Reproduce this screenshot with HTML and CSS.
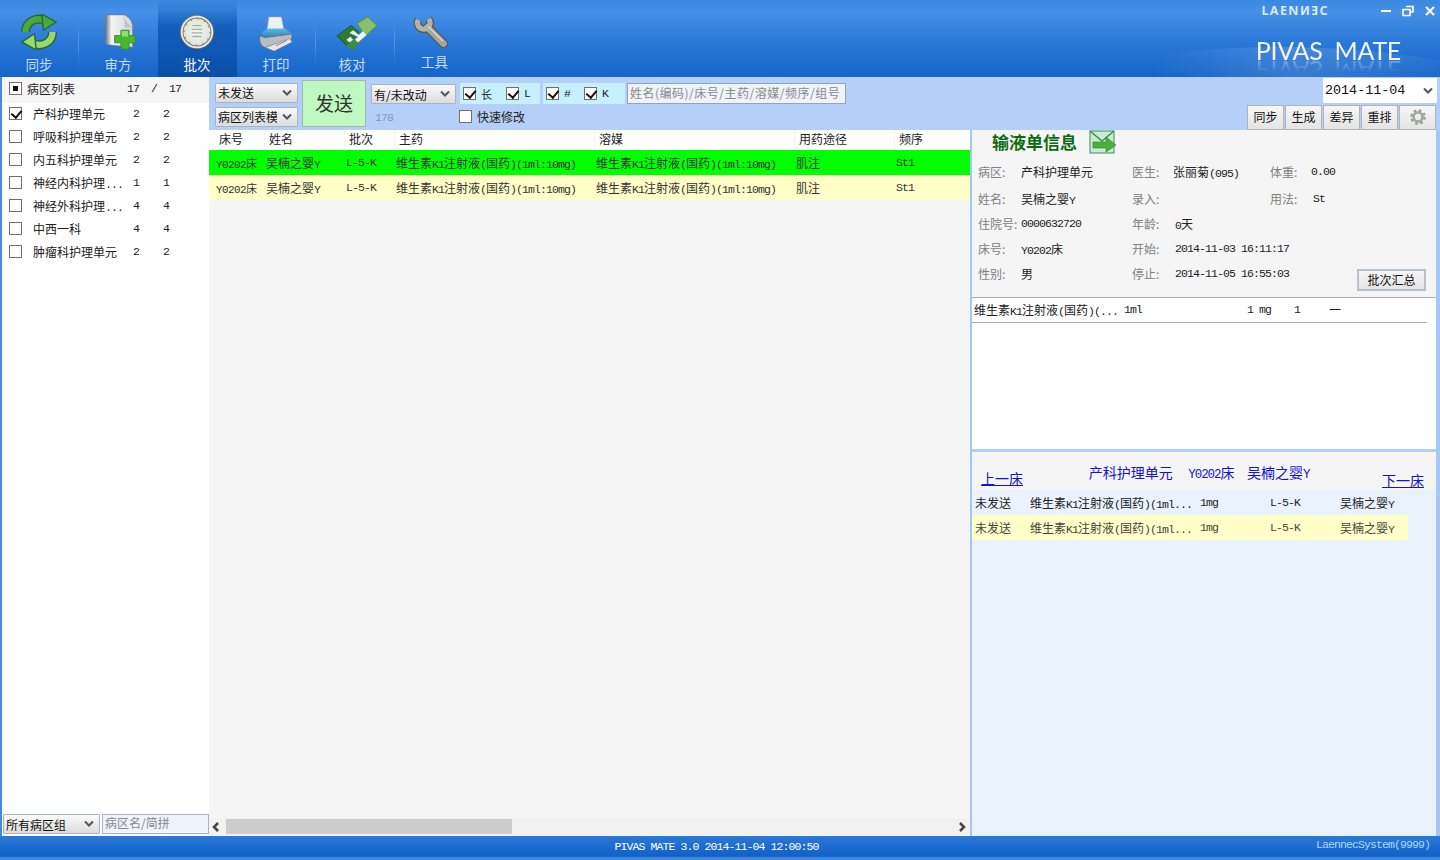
FILE: index.html
```html
<!DOCTYPE html>
<html lang="zh-CN">
<head>
    <meta charset="UTF-8">
    <title>PIVAS MATE</title>
    <link rel="stylesheet" href="styles.css">
</head>
<body>
<div class="app">
    <!-- top bar -->
    <header class="topbar">
        <nav class="tabs">
            <div class="tab">
                <svg class="tab-icon" viewBox="0 0 40 40">
                    <path d="M5 20C5 9 16 3 26 7" fill="none" stroke="#1f6b2c" stroke-width="10"/>
                    <path d="M5 20C5 9 16 3 26 7" fill="none" stroke="#4aa83c" stroke-width="7"/>
                    <path d="M23 0L39 9L25 18Z" fill="#4aa83c" stroke="#1f6b2c" stroke-width="1.500"/>
                    <path d="M35 20C35 31 24 37 14 33" fill="none" stroke="#1f6b2c" stroke-width="10"/>
                    <path d="M35 20C35 31 24 37 14 33" fill="none" stroke="#9ad86e" stroke-width="7"/>
                    <path d="M17 40L1 31L15 22Z" fill="#9ad86e" stroke="#1f6b2c" stroke-width="1.500"/>
                </svg>
                <span>同步</span>
            </div>
            <div class="tab">
                <svg class="tab-icon doc" viewBox="0 0 40 40">
                    <defs>
                        <linearGradient id="pg" x1="0" y1="0" x2="1" y2="0"><stop offset="0" stop-color="#6f757c"/><stop offset=".22" stop-color="#f4f4f4"/><stop offset="1" stop-color="#d4d6d8"/></linearGradient>
                    </defs>
                    <path d="M4 1H25C31 4 34 9 34 15V37L4 34Z" fill="url(#pg)" stroke="#6d747c" stroke-width=".6"/>
                    <path d="M25 1C26 7 28 11 34 15L25 15Z" fill="#c0c4c8"/>
                    <path d="M21 18H30V24H37V32H30V39H21V32H14V24H21Z" fill="#4ab52e" stroke="#2f8f2a"/>
                    <path d="M22 19H29V25H22Z" fill="#96e070"/>
                </svg>
                <span>审方</span>
            </div>
            <div class="tab active">
                <svg class="tab-icon" viewBox="0 0 40 40">
                    <defs>
                        <radialGradient id="cf"><stop offset="0" stop-color="#f4f7f0"/><stop offset="1" stop-color="#dfe4da"/></radialGradient>
                    </defs>
                    <circle cx="20" cy="20" r="19" fill="#77756c"/>
                    <circle cx="20" cy="20" r="17" fill="none" stroke="#ecebe4" stroke-width="2"/>
                    <circle cx="20" cy="20" r="15" fill="url(#cf)"/>
                    <circle cx="20" cy="20" r="14.500" fill="none" stroke="#77867a" stroke-width="1.600" stroke-dasharray="1.400 6.200"/>
                    <path d="M15 13H25M14 17H26M14 21H26M15 25H25" stroke="#a4aea4" stroke-width="1.400"/>
                </svg>
                <span>批次</span>
            </div>
            <div class="tab">
                <svg class="tab-icon low" viewBox="0 0 40 40">
                    <defs>
                        <linearGradient id="pr" x1="0" y1="0" x2="0" y2="1"><stop offset="0" stop-color="#5fb8e6"/><stop offset="1" stop-color="#1a6ea8"/></linearGradient>
                    </defs>
                    <path d="M12 1H26L29 16H10Z" fill="#eef0f2" stroke="#9aa0a8" stroke-width=".6"/>
                    <path d="M4 18L12 14H30L37 19V24L8 28Z" fill="url(#pr)"/>
                    <path d="M2 22C1 28 3 34 8 35L37 26C38 24 38 22 37 20L8 24Z" fill="#b9bcc0" stroke="#5e6268" stroke-width=".8"/>
                    <path d="M8 35L18 39L38 29L35 25Z" fill="#e6e6e6" stroke="#777" stroke-width=".6"/>
                    <path d="M20 33L32 27" stroke="#777"/>
                </svg>
                <span>打印</span>
            </div>
            <div class="tab shift">
                <svg class="tab-icon wide low" viewBox="0 0 44 36">
                    <path d="M1 20L16 9L24 16L11 30Z" fill="#2c7a36" stroke="#1c5a26"/>
                    <path d="M22 7L33 0L43 9L31 20Z" fill="#88c266" stroke="#4d8a3e"/>
                    <path d="M11 30L17 35L27 25L22 21Z" fill="#3d8f40"/>
                    <path d="M14 17L18 14L24 19L28 15L32 19L23 27L20 24L23 21Z" fill="#f2f4ee"/>
                    <path d="M11 24L15 21L18 24L14 27Z" fill="#f2f4ee"/>
                </svg>
                <span>核对</span>
            </div>
            <div class="tab tool">
                <svg class="tab-icon" viewBox="0 0 40 40">
                    <path d="M16 16L34 34" stroke="#57524a" stroke-width="10" stroke-linecap="round"/>
                    <path d="M5.900 7.500A7 7 0 1 0 17.400 6.500" fill="none" stroke="#57524a" stroke-width="8.500"/>
                    <path d="M16 16L34 34" stroke="#a7a59c" stroke-width="7.500" stroke-linecap="round"/>
                    <path d="M5.900 7.500A7 7 0 1 0 17.400 6.500" fill="none" stroke="#b4b2a8" stroke-width="6"/>
                    <path d="M17 15L33 31" stroke="#dcdad2" stroke-width="1.500"/>
                </svg>
                <span>工具</span>
            </div>
        </nav>
        <div class="brand">
            <svg class="swoosh" viewBox="0 0 440 77">
                <defs>
                    <linearGradient id="sw" x1="0" y1="0" x2="1" y2="0"><stop offset=".2" stop-color="#fff" stop-opacity="0"/><stop offset=".6" stop-color="#fff" stop-opacity=".14"/><stop offset="1" stop-color="#fff" stop-opacity=".04"/></linearGradient>
                </defs>
                <path d="M80 70C200 40 320 42 440 60V77H80Z" fill="url(#sw)"/>
            </svg>
            <div class="win-row">
                <span class="logo">LAENИƎC</span>
                <div class="win-btns">
                    <svg viewBox="0 0 12 12"><path d="M1 6H11" stroke="#fff" stroke-width="2"/></svg>
                    <svg viewBox="0 0 12 12"><path d="M4 1.500H11V7H8M1 4.500H8V10.500H1Z" fill="none" stroke="#fff" stroke-width="1.600"/></svg>
                    <svg viewBox="0 0 12 12"><path d="M2 2L10 10M10 2L2 10" stroke="#fff" stroke-width="2"/></svg>
                </div>
            </div>
            <div class="product">PIVAS&nbsp;&nbsp;MATE</div>
        </div>
    </header>

    <div class="main">
        <!-- left ward list -->
        <aside class="wards">
            <div class="ward-head">
                <i class="chk part"></i>
                <span class="ward-title">病区列表</span>
                <span class="n head-count">17&nbsp;&nbsp;/&nbsp;&nbsp;17</span>
            </div>
            <div class="ward"><i class="chk on"></i><span class="ward-name">产科护理单元</span><span class="n c1">2</span><span class="n c2">2</span></div>
            <div class="ward"><i class="chk"></i><span class="ward-name">呼吸科护理单元</span><span class="n c1">2</span><span class="n c2">2</span></div>
            <div class="ward"><i class="chk"></i><span class="ward-name">内五科护理单元</span><span class="n c1">2</span><span class="n c2">2</span></div>
            <div class="ward"><i class="chk"></i><span class="ward-name">神经内科护理<span class="n">...</span></span><span class="n c1">1</span><span class="n c2">1</span></div>
            <div class="ward"><i class="chk"></i><span class="ward-name">神经外科护理<span class="n">...</span></span><span class="n c1">4</span><span class="n c2">4</span></div>
            <div class="ward"><i class="chk"></i><span class="ward-name">中西一科</span><span class="n c1">4</span><span class="n c2">4</span></div>
            <div class="ward"><i class="chk"></i><span class="ward-name">肿瘤科护理单元</span><span class="n c1">2</span><span class="n c2">2</span></div>
            <div class="ward-foot">
                <select class="sel group-sel"><option>所有病区组</option></select>
                <input class="ward-search" placeholder="病区名/简拼">
            </div>
        </aside>

        <div class="work">
            <!-- filter bar -->
            <div class="filters">
                <div class="sel-col">
                    <select class="sel w83"><option>未发送</option></select>
                    <select class="sel w83"><option>病区列表模板</option></select>
                </div>
                <button class="send">发送</button>
                <div class="change-col">
                    <select class="sel change-sel"><option>有/未改动</option></select>
                    <span class="n grey-num">178</span>
                </div>
                <div class="check-col">
                    <div class="check-line">
                        <div class="strip s1">
                            <label class="ck"><i class="chk on"></i>长</label>
                            <label class="ck"><i class="chk on"></i><span class="n">L</span></label>
                        </div>
                        <div class="strip s2">
                            <label class="ck"><i class="chk on"></i><span class="n">#</span></label>
                            <label class="ck"><i class="chk on"></i><span class="n">K</span></label>
                        </div>
                        <input class="search" placeholder="姓名(编码)/床号/主药/溶媒/频序/组号">
                    </div>
                    <label class="ck fast"><i class="chk"></i>快速修改</label>
                </div>
                <div class="right-tools">
                    <select class="sel date-sel"><option>2014-11-04</option></select>
                    <div class="tool-btns">
                        <button class="tbtn">同步</button>
                        <button class="tbtn">生成</button>
                        <button class="tbtn">差异</button>
                        <button class="tbtn">重排</button>
                        <button class="tbtn gear">
                            <svg viewBox="0 0 20 20" width="18" height="18">
                                <circle cx="10" cy="10" r="7" fill="none" stroke="#9ca09c" stroke-width="3.500" stroke-dasharray="2.800 2.700"/>
                                <circle cx="10" cy="10" r="5" fill="none" stroke="#a4a8a4" stroke-width="3"/>
                            </svg>
                        </button>
                    </div>
                </div>
            </div>

            <div class="work-body">
                <!-- order grid -->
                <section class="orders">
                    <div class="row head">
                        <span>床号</span><span>姓名</span><span>批次</span><span>主药</span><span>溶媒</span><span>用药途径</span><span>频序</span>
                    </div>
                    <div class="row item green">
                        <span class="bed">Y0202床</span>
                        <span>吴楠之婴<b class="n">Y</b></span>
                        <span class="n">L-5-K</span>
                        <span>维生素<b class="n">K1</b>注射液<b class="n">(</b>国药<b class="n">)(1ml:10mg)</b></span>
                        <span>维生素<b class="n">K1</b>注射液<b class="n">(</b>国药<b class="n">)(1ml:10mg)</b></span>
                        <span>肌注</span>
                        <span class="n">St1</span>
                    </div>
                    <div class="row item yellow">
                        <span class="bed">Y0202床</span>
                        <span>吴楠之婴<b class="n">Y</b></span>
                        <span class="n">L-5-K</span>
                        <span>维生素<b class="n">K1</b>注射液<b class="n">(</b>国药<b class="n">)(1ml:10mg)</b></span>
                        <span>维生素<b class="n">K1</b>注射液<b class="n">(</b>国药<b class="n">)(1ml:10mg)</b></span>
                        <span>肌注</span>
                        <span class="n">St1</span>
                    </div>
                    <div class="hscroll">
                        <svg class="arrow" viewBox="0 0 8 10"><path d="M6 1L2 5L6 9" fill="none" stroke="#444" stroke-width="2.500"/></svg>
                        <div class="track"><div class="thumb"></div></div>
                        <svg class="arrow" viewBox="0 0 8 10"><path d="M2 1L6 5L2 9" fill="none" stroke="#444" stroke-width="2.500"/></svg>
                    </div>
                </section>

                <!-- detail panel -->
                <section class="detail">
                    <div class="info">
                        <div class="info-title">
                            <h2>输液单信息</h2>
                            <svg class="mail" viewBox="0 0 28 24">
                                <rect x="1" y="1" width="24" height="22" fill="#c8ecd0" stroke="#3c8f5a"/>
                                <path d="M1 1L13 11L25 1" fill="none" stroke="#3c8f5a" stroke-width="1.500"/>
                                <path d="M4 12H17V7L27 15L17 22V18H4Z" fill="#4cae3c" stroke="#2f7f2f" stroke-width=".6"/>
                            </svg>
                        </div>
                        <div class="info-grid">
                            <span class="lb">病区:</span><span>产科护理单元</span>
                            <span class="lb">医生:</span><span>张丽菊<b class="n">(095)</b></span>
                            <span class="lb">体重:</span><span class="n">0.00</span>

                            <span class="lb">姓名:</span><span>吴楠之婴<b class="n">Y</b></span>
                            <span class="lb">录入:</span><span></span>
                            <span class="lb">用法:</span><span class="n v2">St</span>

                            <span class="lb">住院号:</span><span class="n">0000632720</span>
                            <span class="lb">年龄:</span><span class="v2"><b class="n">0</b>天</span>
                            <span></span><span></span>

                            <span class="lb">床号:</span><span><b class="n">Y0202</b>床</span>
                            <span class="lb">开始:</span><span class="n v2">2014-11-03 16:11:17</span>
                            <span></span><span></span>

                            <span class="lb">性别:</span><span>男</span>
                            <span class="lb">停止:</span><span class="n v2">2014-11-05 16:55:03</span>
                            <span class="sum-cell"><button class="tbtn sum">批次汇总</button></span>
                        </div>
                    </div>
                    <div class="drug-box">
                        <div class="drug-row">
                            <span class="d1">维生素<b class="n">K1</b>注射液<b class="n">(</b>国药<b class="n">)(...</b></span>
                            <span class="n d2">1ml</span>
                            <span class="n d3">1 mg</span>
                            <span class="n d4">1</span>
                            <span class="d5">一</span>
                        </div>
                    </div>
                    <div class="bed-box">
                        <div class="bed-nav">
                            <a href="#" class="prev">上一床</a>
                            <span class="bed-title">产科护理单元&nbsp;&nbsp;&nbsp;&nbsp;&nbsp;<b class="n big">Y0202</b>床&nbsp;&nbsp;&nbsp;&nbsp;吴楠之婴<b class="n big">Y</b></span>
                            <a href="#" class="next">下一床</a>
                        </div>
                        <div class="bed-list">
                            <div class="bed-row">
                                <span>未发送</span>
                                <span>维生素<b class="n">K1</b>注射液<b class="n">(</b>国药<b class="n">)(1ml...</b></span>
                                <span class="n">1mg</span>
                                <span class="n">L-5-K</span>
                                <span>吴楠之婴<b class="n">Y</b></span>
                            </div>
                            <div class="bed-row yellow">
                                <span>未发送</span>
                                <span>维生素<b class="n">K1</b>注射液<b class="n">(</b>国药<b class="n">)(1ml...</b></span>
                                <span class="n">1mg</span>
                                <span class="n">L-5-K</span>
                                <span>吴楠之婴<b class="n">Y</b></span>
                            </div>
                        </div>
                    </div>
                </section>
            </div>
        </div>
    </div>

    <footer class="status">
        <span></span>
        <span class="n stamp">PIVAS MATE 3.0 2014-11-04 12:00:50</span>
        <span class="n sys">LaennecSystem(9999)</span>
    </footer>
</div>
</body>
</html>
```

FILE: styles.css
```css
* {
    margin: 0;
    padding: 0;
    box-sizing: border-box;
}

body {
    font-family: "Noto Sans CJK SC", sans-serif;
    font-size: 13px;
    color: #222;
    background: #3f8be0;
    overflow: hidden;
}

.app {
    width: 1440px;
    height: 860px;
    display: flex;
    flex-direction: column;
}

/* latin text, same cell width as half a hanzi */
.n {
    font-family: "Liberation Mono", monospace;
    font-size: 11.5px;
    letter-spacing: -0.9px;
    font-weight: 400;
}

b {
    font-weight: 400;
}

.topbar {
    height: 77px;
    display: flex;
    justify-content: space-between;
    background: linear-gradient(180deg, #3a88e0 0%, #4690e6 15%, #2a78d8 55%, #1564c8 100%);
}

.tabs {
    display: flex;
}

.tab {
    width: 79px;
    padding-top: 14px;
    display: flex;
    flex-direction: column;
    align-items: center;
    color: #c4dcf8;
    font-size: 13.5px;
    line-height: 20px;
    border-right: 1px solid;
    border-image: linear-gradient(180deg, transparent 30%, rgba(255, 255, 255, 0.22) 55%, transparent 88%) 1;
}

.tab:nth-child(2),
.tab.active {
    border-image: none;
    border-right-color: transparent;
}

.tab.active {
    color: #fff;
    background: linear-gradient(180deg, rgba(10, 70, 160, 0) 0%, #1260bc 35%, #0b4ea8 100%);
}

.tab.shift span {
    margin-right: 6px;
}

.tab.tool {
    border: 0;
    line-height: 16px;
    padding-top: 13px;
}

.tab.tool .tab-icon {
    margin-right: 8px;
}

.tab-icon {
    width: 36px;
    height: 36px;
    margin-bottom: 4px;
    flex: none;
}

.tab-icon.doc {
    margin-left: 4px;
}

.tab-icon.low {
    margin-top: 2px;
    margin-bottom: 2px;
}

.tab-icon.wide {
    width: 42px;
    margin-left: 3px;
}

.brand {
    width: 440px;
    position: relative;
    overflow: hidden;
}

.swoosh {
    position: absolute;
    left: 0;
    top: 0;
    width: 440px;
    height: 77px;
}

.win-row {
    position: relative;
    display: flex;
    justify-content: flex-end;
    align-items: center;
    padding: 3px 4px 0 0;
    height: 18px;
}

.logo {
    font-family: "Noto Sans", sans-serif;
    font-size: 12.5px;
    font-weight: 700;
    letter-spacing: 1.4px;
    color: #d8e8fb;
    margin-right: 51px;
}

.win-btns {
    display: flex;
    gap: 10px;
}

.win-btns svg {
    width: 12px;
    height: 12px;
}

.product {
    position: relative;
    margin-top: 18px;
    padding-right: 39px;
    text-align: right;
    font-family: "Lato", sans-serif;
    font-weight: 400;
    font-size: 25px;
    letter-spacing: -0.3px;
    line-height: 28px;
    color: #eef5fe;
    -webkit-box-reflect: below -7px linear-gradient(transparent 45%, rgba(255, 255, 255, 0.45));
}

.main {
    flex: 1;
    display: flex;
    min-height: 0;
    padding-left: 2px;
}

/* ward list */
.wards {
    width: 207px;
    background: #fff;
    display: flex;
    flex-direction: column;
}

.chk {
    width: 13px;
    height: 13px;
    border: 1px solid #707070;
    background: #fff;
    display: inline-block;
    flex: none;
    position: relative;
}

.chk.on::after {
    content: "";
    position: absolute;
    left: 3px;
    top: 0;
    width: 5px;
    height: 8px;
    border: solid #111;
    border-width: 0 2px 2px 0;
    transform: rotate(40deg);
}

.chk.part::after {
    content: "";
    position: absolute;
    left: 3px;
    top: 3px;
    width: 5px;
    height: 5px;
    background: #111;
}

.ward-head {
    height: 26px;
    background: #f5f5f5;
    display: flex;
    align-items: center;
    padding: 0 0 3px 7px;
    font-size: 12px;
}

.ward-title {
    margin-left: 5px;
}

.head-count {
    margin-left: 52px;
}

.ward {
    height: 23px;
    display: flex;
    align-items: center;
    padding: 0 0 2px 7px;
    position: relative;
}

.ward-name {
    margin-left: 11px;
    width: 100px;
    font-size: 12px;
    white-space: nowrap;
}

.c1 {
    width: 30px;
}

.ward-foot {
    margin-top: auto;
    height: 22px;
    display: flex;
    gap: 2px;
    padding-left: 1px;
}

.sel {
    appearance: none;
    -webkit-appearance: none;
    height: 20px;
    border: 1px solid #a8b4c4;
    border-radius: 1px;
    padding: 0 20px 0 2px;
    font-family: "Noto Sans CJK SC", sans-serif;
    font-size: 12px;
    color: #111;
    background: url("data:image/svg+xml,%3Csvg xmlns='http://www.w3.org/2000/svg' width='10' height='8'%3E%3Cpath d='M1 1.500L5 5.500L9 1.500' fill='none' stroke='%23555' stroke-width='2'/%3E%3C/svg%3E") no-repeat right 5px center, linear-gradient(180deg, #fafafa, #dcdcdc);
}

.group-sel {
    width: 97px;
}

.ward-search {
    width: 107px;
    height: 20px;
    border: 1px solid #a8b4c4;
    background: #eef3fd;
    padding: 0 2px 3px;
    font-family: "Noto Sans CJK SC", sans-serif;
    font-size: 12px;
}

.ward-search::placeholder,
.search::placeholder {
    color: #8a8a8a;
}

.work {
    flex: 1;
    min-width: 0;
    display: flex;
    flex-direction: column;
}

/* filter bar */
.filters {
    height: 53px;
    background: #b5d0f8;
    display: flex;
    flex: none;
}

.sel-col {
    display: flex;
    flex-direction: column;
    gap: 4px;
    padding: 6px 0 0 6px;
}

.w83 {
    width: 83px;
    padding-bottom: 3px;
}

.send {
    width: 64px;
    height: 47px;
    margin: 3px 0 0 4px;
    padding-bottom: 2px;
    border: 1px solid #a9b5a9;
    background: #bff8c0;
    font-family: "Noto Sans CJK SC", sans-serif;
    font-size: 19px;
    color: #333;
}

.change-col {
    margin-left: 5px;
    padding-top: 7px;
    width: 85px;
    display: flex;
    flex-direction: column;
}

.change-sel {
    width: 85px;
}

.grey-num {
    margin: 7px 0 0 4px;
    color: #8a97a8;
}

.check-col {
    margin-left: 4px;
    padding-top: 6px;
    display: flex;
    flex-direction: column;
}

.check-line {
    display: flex;
    height: 21px;
}

.strip {
    display: flex;
    align-items: center;
    padding-left: 3px;
    background: #c6f0fe;
    font-size: 11px;
}

.strip.s1 {
    width: 80px;
    gap: 14px;
}

.strip.s2 {
    width: 82px;
    margin-left: 3px;
    padding-left: 3px;
    gap: 14px;
}

.ck {
    display: flex;
    align-items: center;
    gap: 5px;
}

.search {
    width: 219px;
    height: 21px;
    margin-left: 2px;
    border: 1px solid #98a4b4;
    background: #eef3fd;
    padding: 0 2px 3px;
    font-family: "Noto Sans CJK SC", sans-serif;
    font-size: 12px;
    letter-spacing: 0.5px;
}

.fast {
    margin: 4px 0 0 -1px;
    gap: 5px;
    font-size: 12px;
}

.right-tools {
    margin-left: auto;
    width: 193px;
    display: flex;
    flex-direction: column;
    align-items: flex-end;
}

.date-sel {
    width: 114px;
    height: 25px;
    margin: 1px 3px 0 0;
    border: 0;
    padding-left: 2px;
    font-family: "Liberation Mono", monospace;
    font-size: 13.4px;
    background: url("data:image/svg+xml,%3Csvg xmlns='http://www.w3.org/2000/svg' width='10' height='8'%3E%3Cpath d='M1 1.500L5 5.500L9 1.500' fill='none' stroke='%23555' stroke-width='2'/%3E%3C/svg%3E") no-repeat right 4px center, #fff;
}

.tool-btns {
    display: flex;
    gap: 1px;
    margin: 2px 4px 0 0;
}

.tbtn {
    width: 37px;
    height: 25px;
    padding-bottom: 2px;
    border: 1px solid #b0b4b8;
    background: linear-gradient(180deg, #f6f6f6, #e4e4e4);
    font-family: "Noto Sans CJK SC", sans-serif;
    font-size: 12px;
    color: #111;
    display: flex;
    align-items: center;
    justify-content: center;
}

.work-body {
    flex: 1;
    min-height: 0;
    display: flex;
}

/* order grid */
.orders {
    width: 763px;
    background: #f5f5f5;
    display: flex;
    flex-direction: column;
    border-right: 2px solid #a8c6f2;
}

.row {
    display: grid;
    grid-template-columns: 55px 80px 50px 200px 200px 100px 1fr;
    align-items: center;
    white-space: nowrap;
}

.row.head {
    height: 20px;
    background: #fff;
    font-size: 12px;
    align-items: stretch;
}

.row.head span {
    padding: 0 0 0 4px;
    line-height: 17px;
    border-left: 1px solid #f4f4f4;
}

.row.head span:first-child {
    padding-left: 10px;
    border: 0;
}

.row.item {
    height: 25px;
    font-size: 12px;
    color: #333;
}

.row.item > span {
    padding-left: 2px;
}

.row.item > .bed {
    padding-left: 7px;
    font-size: 11px;
    letter-spacing: -0.6px;
    font-family: "Liberation Mono", "Noto Sans CJK SC", monospace;
}

.row.green {
    background: #00ff00;
}

.row.yellow {
    background: #ffffc8;
}

.hscroll {
    margin-top: auto;
    height: 17px;
    margin-bottom: 1px;
    display: flex;
    align-items: center;
    padding: 0 4px 0 3px;
    gap: 6px;
    background: #f1f1f1;
}

.arrow {
    width: 8px;
    height: 10px;
    flex: none;
}

.track {
    flex: 1;
}

.thumb {
    width: 286px;
    height: 15px;
    background: #cdcdcd;
}

/* detail panel */
.detail {
    flex: 1;
    min-width: 0;
    display: flex;
    flex-direction: column;
    border-right: 4px solid #a8c6f2;
}

.info {
    height: 167px;
    background: #f5f5f5;
    padding-left: 6px;
}

.info-title {
    display: flex;
    align-items: center;
    height: 24px;
    padding-left: 14px;
}

.info-title h2 {
    font-size: 17px;
    line-height: 22px;
    font-weight: 700;
    color: #0b6b12;
}

.mail {
    width: 28px;
    height: 24px;
    margin-left: 12px;
}

.info-grid {
    display: grid;
    grid-template-columns: 43px 111px 41px 97px 41px 1fr;
    grid-template-rows: 30px 25px 25px 25px 25px;
    align-items: center;
    font-size: 12px;
    color: #222;
    white-space: nowrap;
    margin-top: 2px;
}

.lb {
    color: #808080;
}

.v2 {
    padding-left: 2px;
}

.sum-cell {
    grid-column: span 2;
    align-self: start;
    display: flex;
    justify-content: flex-end;
    padding-right: 10px;
}

.tbtn.sum {
    width: 69px;
    height: 22px;
    margin-top: 8px;
    border: 2px solid #b4c0cc;
}

.drug-box {
    height: 152px;
    background: #fff;
    flex: none;
    border-top: 1px solid #aaa;
    padding-right: 2px;
}

.drug-row {
    height: 25px;
    display: flex;
    align-items: center;
    font-size: 12px;
    padding: 0 0 2px 2px;
    border-bottom: 1px solid #aaa;
    margin-right: 7px;
    white-space: nowrap;
}

.d1 {
    width: 150px;
}

.d2 {
    width: 123px;
}

.d3 {
    width: 47px;
}

.d4 {
    width: 35px;
}

.bed-box {
    flex: 1;
    min-height: 0;
    border-top: 3px solid #b5d0f8;
    background: #eaf2fe;
    display: flex;
    flex-direction: column;
}

.bed-nav {
    height: 38px;
    background: #f5f5f5;
    display: flex;
    justify-content: space-between;
    padding: 0 12px 0 9px;
    color: #1212d8;
    font-size: 14px;
    white-space: nowrap;
}

.bed-nav a {
    color: #1212d8;
    line-height: 20px;
    padding-top: 16px;
}

.bed-nav .next {
    padding-top: 18px;
}

.bed-title {
    line-height: 20px;
    padding: 10px 0 0 21px;
    margin-right: 28px;
}

.big {
    font-size: 12.5px;
    letter-spacing: -1.1px;
}

.bed-row {
    height: 25px;
    width: 436px;
    display: grid;
    grid-template-columns: 55px 170px 70px 70px 1fr;
    align-items: center;
    padding-left: 3px;
    font-size: 12px;
    white-space: nowrap;
}

.bed-row.yellow {
    background: #ffffc8;
    color: #444;
}

/* bottom status bar */
.status {
    height: 24px;
    display: grid;
    grid-template-columns: 1fr auto 1fr;
    align-items: center;
    padding: 0 10px 3px 0;
    background: linear-gradient(180deg, #2a7ada 0%, #1060c6 85%, #3f8be0 88%);
}

.stamp {
    color: #fff;
    margin-left: 3px;
}

.sys {
    text-align: right;
    color: #b4d4f8;
    padding-bottom: 4px;
}
```
